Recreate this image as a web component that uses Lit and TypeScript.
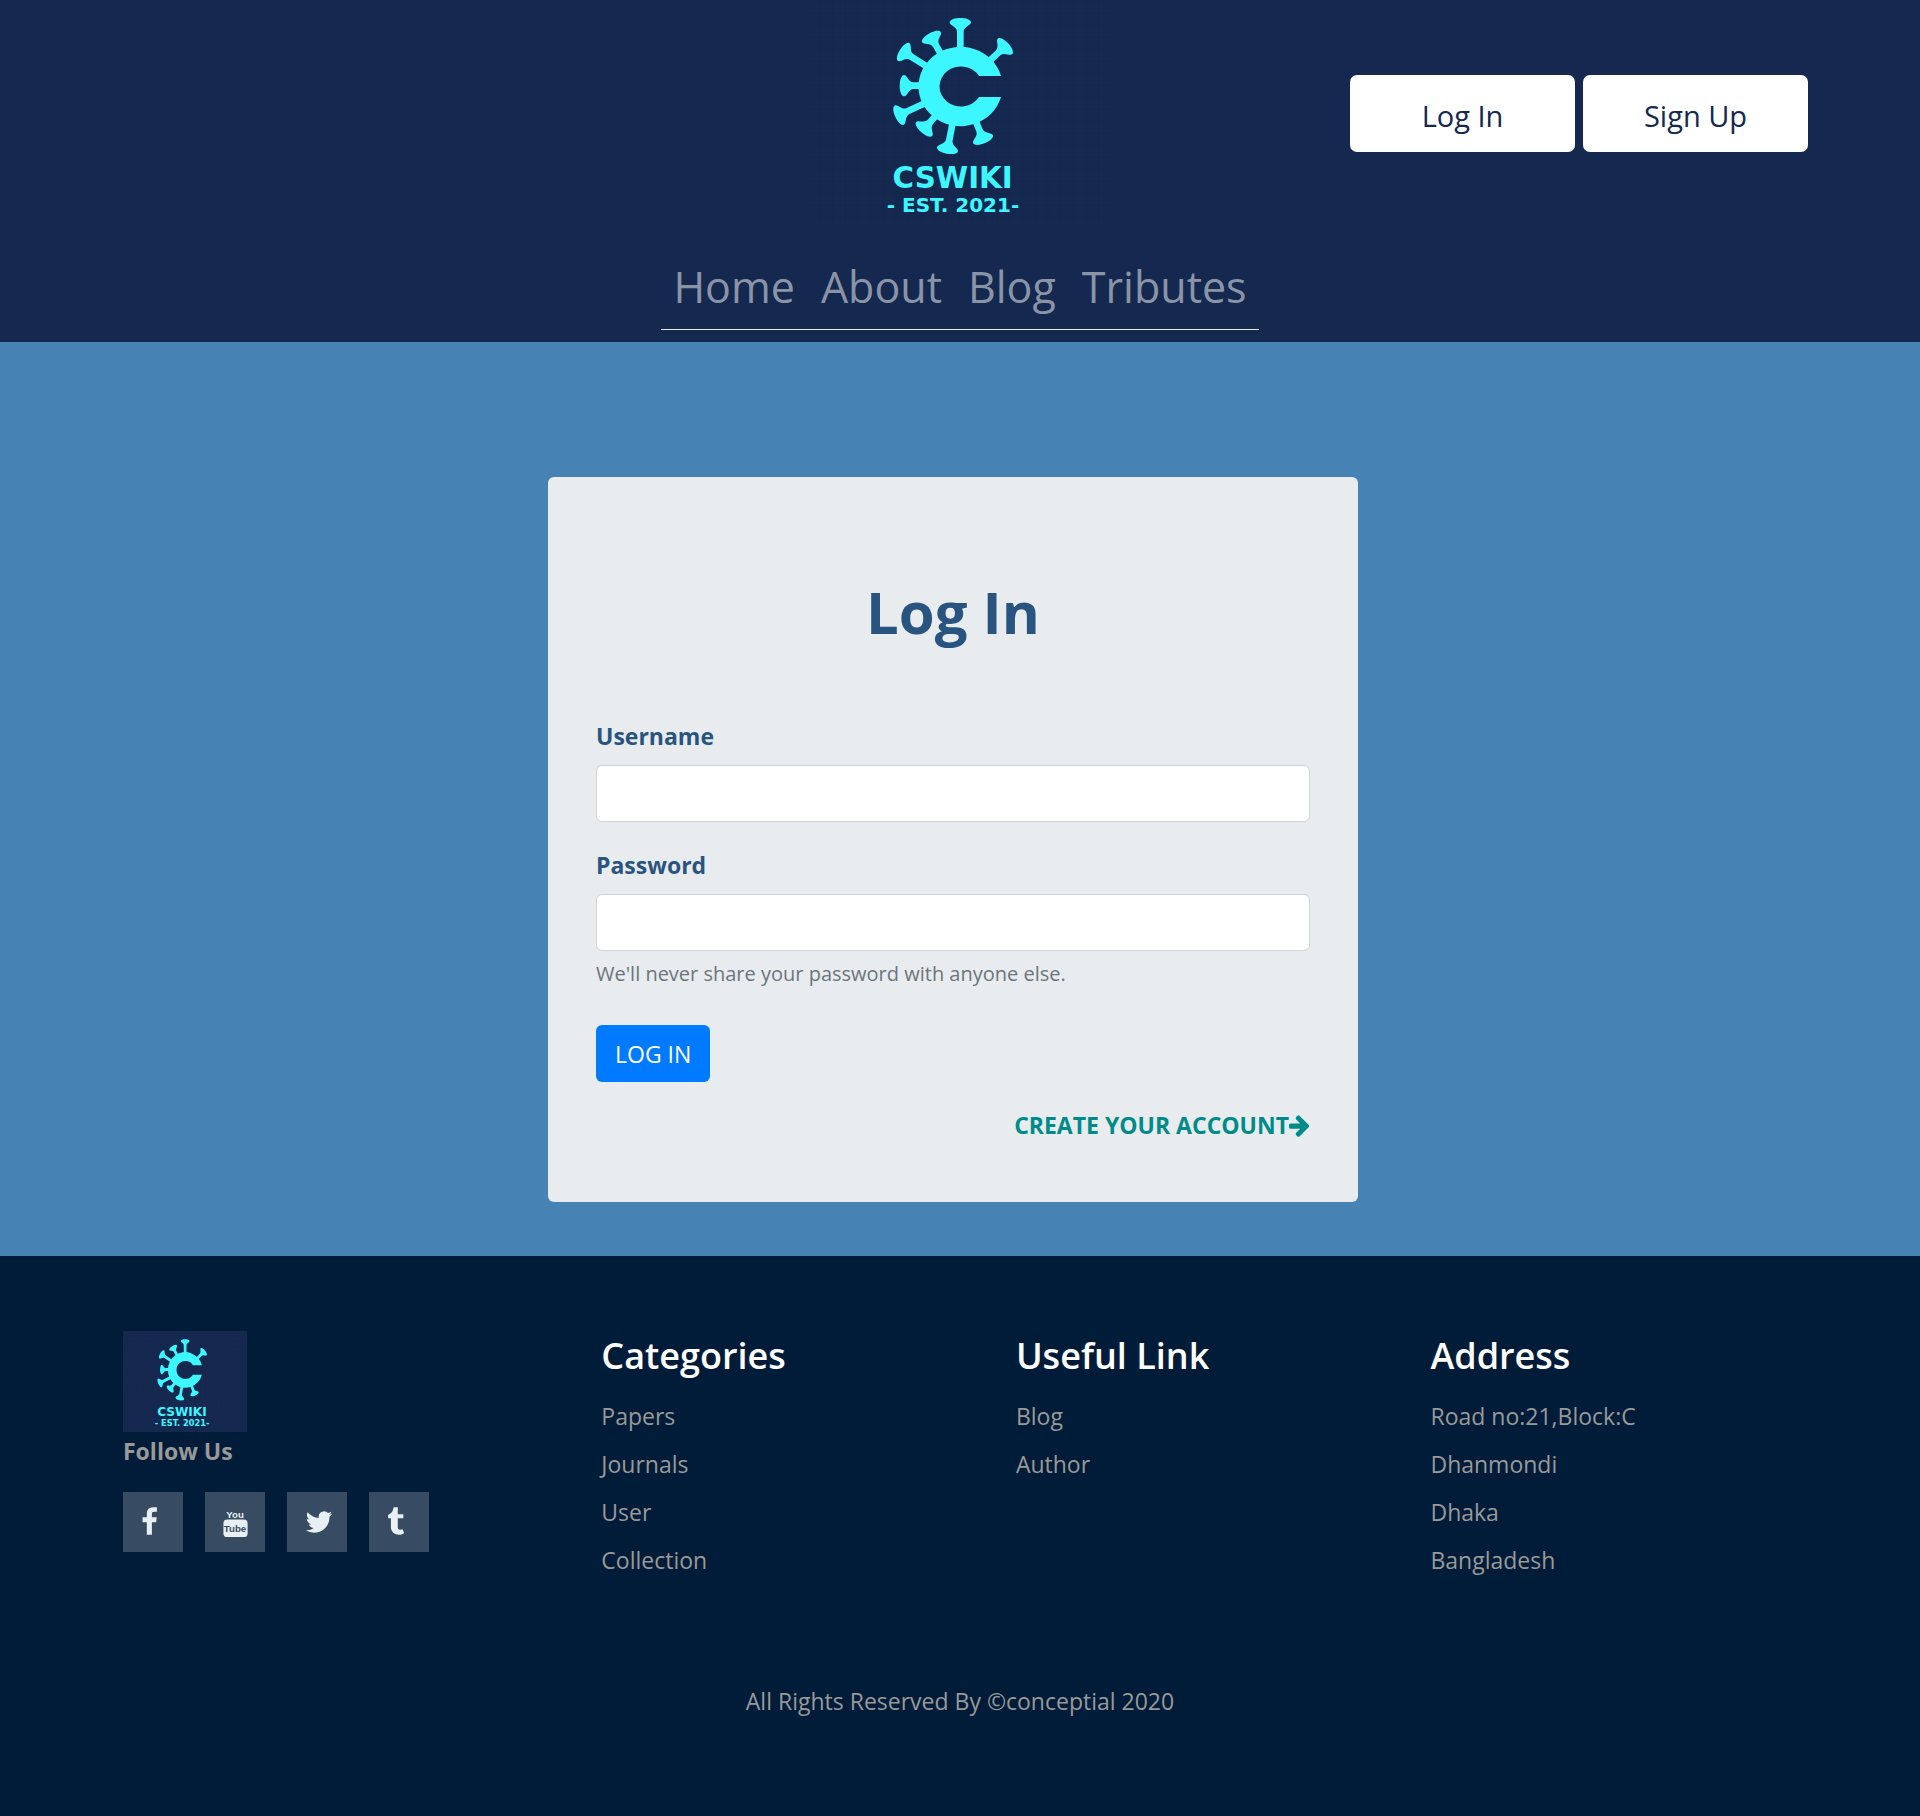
import { LitElement, html, svg, css } from "lit";
import { customElement, property } from "lit/decorators.js";

/* Each spike: outer tip x, outer tip y, rotation in degrees. */
const SPIKES: [number, number, number][] = [
  [481, 54, 0],
  [625, 130, 47],
  [388, 100, -29],
  [300, 149, -58],
  [299, 257, -90],
  [286, 351, -115],
  [364, 397, -139],
  [440, 461, -169],
  [554, 430, 158],
];

@customElement("cswiki-logo")
export class CswikiLogo extends LitElement {
  /* Vertical growth of the artwork, in percent. */
  @property({ type: Number }) tall = 100;

  static styles = css`
    :host { display: block; background: #15284f; }
    .art { display: block; width: 100%; height: auto; }
    .mark { fill: #3cf7ff; }
    .grid { fill: none; stroke: #14254b; stroke-width: 3; }
    .word {
      fill: #3cf7ff;
      font-family: "DejaVu Sans", sans-serif;
      font-weight: 700;
      text-anchor: middle;
    }
    .name { font-size: 88px; }
    .est { font-size: 60px; }
  `;

  render() {
    const k = this.tall / 100;
    return html`
      <svg class="art" viewBox="30 0 900 ${Math.round(675 * k)}" role="img" aria-label="CSWIKI">
        <defs>
          <pattern id="g" width="38" height="36" patternUnits="userSpaceOnUse">
            <path class="grid" d="M22 0V36M0 4H38" />
          </pattern>
        </defs>
        <rect x="30" width="900" height="740" fill="url(#g)" />
        <g class="mark" transform="scale(1 ${k})">
          <path d="M603 228A126 119 0 1 0 603 291H537A64 60 0 1 1 537 228Z" />
          ${SPIKES.map(
            ([x, y, a]) => svg`<path
              transform="translate(${x} ${y}) rotate(${a})"
              d="M-32 13C-30 -4 30 -4 32 13C32 23 10 26 10 42V105H-10V42C-10 26 -32 23 -32 13Z" />`
          )}
        </g>
        <text class="word name" x="458" y=${Math.round(563 * k)}>CSWIKI</text>
        <text class="word est" x="459" y=${Math.round(635 * k)}>- EST. 2021-</text>
      </svg>
    `;
  }
}

const LISTS = [
  { title: "Categories", links: true, items: ["Papers", "Journals", "User", "Collection"] },
  { title: "Useful Link", links: true, items: ["Blog", "Author"] },
  { title: "Address", links: false, items: ["Road no:21,Block:C", "Dhanmondi", "Dhaka", "Bangladesh"] },
];

const FACEBOOK = svg`<svg class="glyph slim" viewBox="384 0 1024 1792"><path d="M1343 12v264h-157q-86 0-116 36t-30 108v189h293l-39 296h-254v759h-306v-759h-255v-296h255v-218q0-186 104-288.5t277-102.5q147 0 228 12z"/></svg>`;
const YOUTUBE = svg`<svg class="glyph mid" viewBox="0 0 26 31"><text x="12" y="11" font-size="10" text-anchor="middle">You</text><rect y="13" width="25" height="18" rx="4"/><text class="cut" x="12" y="26" font-size="10" text-anchor="middle">Tube</text></svg>`;
const TWITTER = svg`<svg class="glyph wide" viewBox="64 0 1664 1792"><path d="M1684 408q-67 98-162 167 1 14 1 42 0 130-38 259.5t-115.5 248.5-184.5 210.5-258 146-323 54.5q-271 0-496-145 35 4 78 4 225 0 401-138-105-2-188-64.5t-114-159.5q33 5 61 5 43 0 85-11-112-23-185.5-111.5t-73.5-205.5v-4q68 38 146 41-66-44-105-115t-39-154q0-88 44-163 121 149 294.5 238.5t371.5 99.5q-8-38-8-74 0-134 94.5-228.5t228.5-94.5q140 0 236 102 109-21 205-78-37 115-142 178 93-10 186-50z"/></svg>`;
const TUMBLR = svg`<svg class="glyph slim" viewBox="384 0 1024 1792"><path d="M1328 1329l80 237q-23 35-111 66t-177 32q-104 2-190.5-26t-142.5-74-95-106-55.5-120-16.5-118v-544h-168v-215q72-26 129-69.5t91-90 58-102 34-99 15-88.5q1-5 4.5-8.5t7.5-3.5h244v424h333v252h-334v518q0 30 6.5 56t22.5 52.5 49.5 41.5 81.5 14q78-2 134-29z"/></svg>`;

const SOCIAL = [
  { name: "Facebook", icon: FACEBOOK },
  { name: "YouTube", icon: YOUTUBE },
  { name: "Twitter", icon: TWITTER },
  { name: "Tumblr", icon: TUMBLR },
];

@customElement("app-root")
export class AppRoot extends LitElement {
  static styles = css`
    :host {
      display: block;
      font-family: "Segoe UI", "Open Sans", "Noto Sans", sans-serif;
      font-size: 23px;
      line-height: 36px;
      color: #999;
    }
    * { box-sizing: border-box; }
    a { color: inherit; text-decoration: none; }
    h1, h2, p, ul { margin: 0; padding: 0; }
    ul { list-style: none; }

    .header {
      display: grid;
      grid-template-columns: 1fr 300px 1fr;
      justify-items: center;
      padding-bottom: 12px;
      background: #15284f;
    }
    .brand { grid-column: 2; width: 100%; }
    .account {
      display: flex;
      gap: 8px;
      justify-self: end;
      padding: 75px 112px 0 0;
    }
    .pill {
      width: 225px;
      height: 77px;
      padding: 5px 0 0;
      border: 0;
      border-radius: 7px;
      background: #fff;
      color: #15284f;
      font: inherit;
      font-size: 29px;
    }
    .nav {
      grid-column: 1 / -1;
      display: flex;
      gap: 2px;
      padding: 28px 0 8px;
      border-bottom: 1px solid #e8ecef;
      font-size: 43px;
      line-height: 68px;
      color: #8a94a7;
    }
    .nav-link { padding: 0 12px; }

    .main {
      display: flex;
      justify-content: center;
      padding: 135px 14px 54px 0;
      background: #4682b4;
    }
    .card {
      width: 810px;
      max-width: 100%;
      padding: 101px 48px 59px;
      border-radius: 6px;
      background: #e8ecef;
      color: #2a5480;
    }
    .title {
      margin-bottom: 72px;
      font-size: 58px;
      line-height: 68px;
      font-weight: 700;
      text-align: center;
    }
    .label { display: block; margin-bottom: 11px; font-weight: 700; }
    .input {
      display: block;
      width: 100%;
      height: 57px;
      padding: 9px 18px;
      border: 1px solid #ced4da;
      border-radius: 6px;
      background: #fff;
      font: inherit;
    }
    .field + .field { margin-top: 25px; }
    .hint { margin-top: 7px; font-size: 20px; line-height: 32px; color: #6c757d; }
    .submit {
      display: block;
      height: 57px;
      margin: 35px 0 25px;
      padding: 0 19px;
      border: 0;
      border-radius: 6px;
      background: #007bff;
      color: #fff;
      font: inherit;
    }
    .create {
      display: flex;
      justify-content: flex-end;
      align-items: center;
      font-weight: 700;
      color: #008b8b;
    }
    .arrow { width: 21px; height: 23px; fill: currentColor; }

    .footer { padding-bottom: 97px; background: #001c38; }
    .columns {
      display: grid;
      grid-template-columns: 15fr 13fr 13fr 13fr;
      padding: 75px 75px 99px 123px;
    }
    .small-brand { width: 124px; }
    .follow { line-height: 38px; font-weight: 700; }
    .social { display: flex; gap: 22px; margin-top: 22px; }
    .tile {
      display: block;
      width: 60px;
      height: 60px;
      padding: 15px 0 0 18px;
      background: #374b62;
    }
    .glyph {
      display: block;
      height: 30px;
      fill: #e8f0f3;
      font-family: "Liberation Sans Narrow", "Liberation Sans", sans-serif;
      font-weight: 700;
    }
    .slim { width: 17px; }
    .mid { width: 26px; }
    .wide { width: 28px; }
    .cut { fill: #374b62; }
    .heading {
      margin-bottom: 11px;
      font-size: 36px;
      line-height: 50px;
      font-weight: 600;
      color: #fff;
    }
    .item { line-height: 48px; }
    .rights { text-align: center; }
  `;

  render() {
    return html`
      <header class="header">
        <a class="brand" href="#"><cswiki-logo></cswiki-logo></a>
        <div class="account">
          <button class="pill" type="button">Log In</button>
          <button class="pill" type="button">Sign Up</button>
        </div>
        <nav class="nav">
          ${["Home", "About", "Blog", "Tributes"].map(
            (t) => html`<a class="nav-link" href="#">${t}</a>`
          )}
        </nav>
      </header>

      <main class="main">
        <form class="card">
          <h1 class="title">Log In</h1>
          <div class="field">
            <label class="label" for="username">Username</label>
            <input class="input" id="username" type="text" />
          </div>
          <div class="field">
            <label class="label" for="password">Password</label>
            <input class="input" id="password" type="password" aria-describedby="hint" />
            <p class="hint" id="hint">We'll never share your password with anyone else.</p>
          </div>
          <button class="submit" type="button">LOG IN</button>
          <a class="create" href="#">CREATE YOUR ACCOUNT<svg class="arrow" viewBox="128 90 1536 1664"><path d="M1600 960q0 54-37 91l-651 651q-39 37-91 37-51 0-90-37l-75-75q-38-38-38-91t38-91l293-293h-704q-52 0-84.5-37.5t-32.5-90.5v-128q0-53 32.5-90.5t84.5-37.5h704l-293-294q-38-36-38-90t38-90l75-75q38-38 90-38 53 0 91 38l651 651q37 35 37 90z"/></svg></a>
        </form>
      </main>

      <footer class="footer">
        <div class="columns">
          <section>
            <cswiki-logo class="small-brand" tall="109"></cswiki-logo>
            <p class="follow">Follow Us</p>
            <div class="social">
              ${SOCIAL.map((s) => html`<a class="tile" href="#" aria-label=${s.name}>${s.icon}</a>`)}
            </div>
          </section>
          ${LISTS.map(
            (l) => html`<section>
              <h2 class="heading">${l.title}</h2>
              <ul>
                ${l.items.map(
                  (i) => html`<li class="item">${l.links ? html`<a href="#">${i}</a>` : i}</li>`
                )}
              </ul>
            </section>`
          )}
        </div>
        <p class="rights">All Rights Reserved By ©conceptial 2020</p>
      </footer>
    `;
  }
}
